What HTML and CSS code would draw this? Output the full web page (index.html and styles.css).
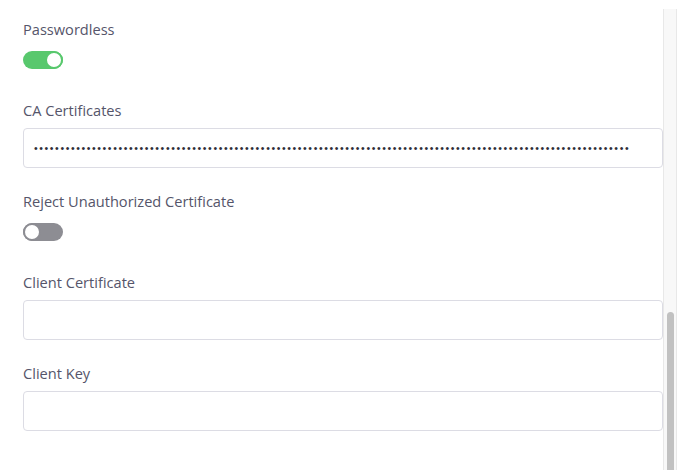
FILE: index.html
```html
<!DOCTYPE html>
<html>
<head>
<meta charset="utf-8">
<link rel="stylesheet" href="styles.css">
</head>
<body>
<div class="page">
  <main class="form">
    <div class="field">
      <div class="label">Passwordless</div>
      <div class="toggle-row"><span class="toggle on"><span class="knob"></span></span></div>
    </div>
    <div class="field">
      <div class="label">CA Certificates</div>
      <div class="input"><span class="dots">•••••••••••••••••••••••••••••••••••••••••••••••••••••••••••••••••••••••••••••••••••••••••••••••••••••••••••••••••</span></div>
    </div>
    <div class="field">
      <div class="label">Reject Unauthorized Certificate</div>
      <div class="toggle-row"><span class="toggle off"><span class="knob"></span></span></div>
    </div>
    <div class="field">
      <div class="label">Client Certificate</div>
      <div class="input"></div>
    </div>
    <div class="field">
      <div class="label">Client Key</div>
      <div class="input"></div>
    </div>
  </main>
  <div class="track"><div class="thumb"></div></div>
</div>
</body>
</html>
```
FILE: styles.css
```css
html, body {
  margin: 0;
  padding: 0;
  background: #ffffff;
  overflow: hidden;
  height: 470px;
}
.page {
  display: flex;
  height: 470px;
}
.form {
  width: 640px;
  padding: 19px 0 0 23px;
  display: flex;
  flex-direction: column;
  gap: 23px;
  font-family: "Open Sans", Lato, sans-serif;
}
.label {
  font-size: 14.6px;
  line-height: 20px;
  color: #55556a;
  margin-bottom: 8px;
}
.toggle-row {
  height: 30px;
  padding-top: 4px;
  box-sizing: border-box;
}
.toggle {
  display: flex;
  align-items: center;
  width: 40px;
  height: 18px;
  border-radius: 9px;
  box-sizing: border-box;
}
.toggle.on {
  background: #58c86d;
  justify-content: flex-end;
}
.toggle.off {
  background: #8d8d93;
  justify-content: flex-start;
}
.knob {
  width: 18px;
  height: 18px;
  border-radius: 50%;
  background: #ffffff;
  box-sizing: border-box;
}
.toggle.on .knob { border: 2px solid #58c86d; }
.toggle.off .knob { border: 2px solid #8d8d93; }
.input {
  height: 40px;
  box-sizing: border-box;
  border: 1px solid #dcdce4;
  border-radius: 4px;
  display: flex;
  align-items: center;
  padding-left: 10px;
  overflow: hidden;
}
.dots {
  font-family: "Liberation Sans", sans-serif;
  font-size: 10.5px;
  letter-spacing: 1.6px;
  color: #2e2e38;
  white-space: nowrap;
  line-height: 10px;
}
.track {
  width: 14px;
  margin-top: 9px;
  background: #f8f8f8;
  border-left: 1px solid #e8e8e8;
  border-right: 1px solid #e8e8e8;
  box-sizing: border-box;
  display: flex;
  flex-direction: column;
  align-items: center;
  overflow: hidden;
}
.thumb {
  flex: none;
  width: 7px;
  height: 200px;
  margin-top: 303px;
  background: #c1c1c1;
  border-radius: 4px;
}
```
